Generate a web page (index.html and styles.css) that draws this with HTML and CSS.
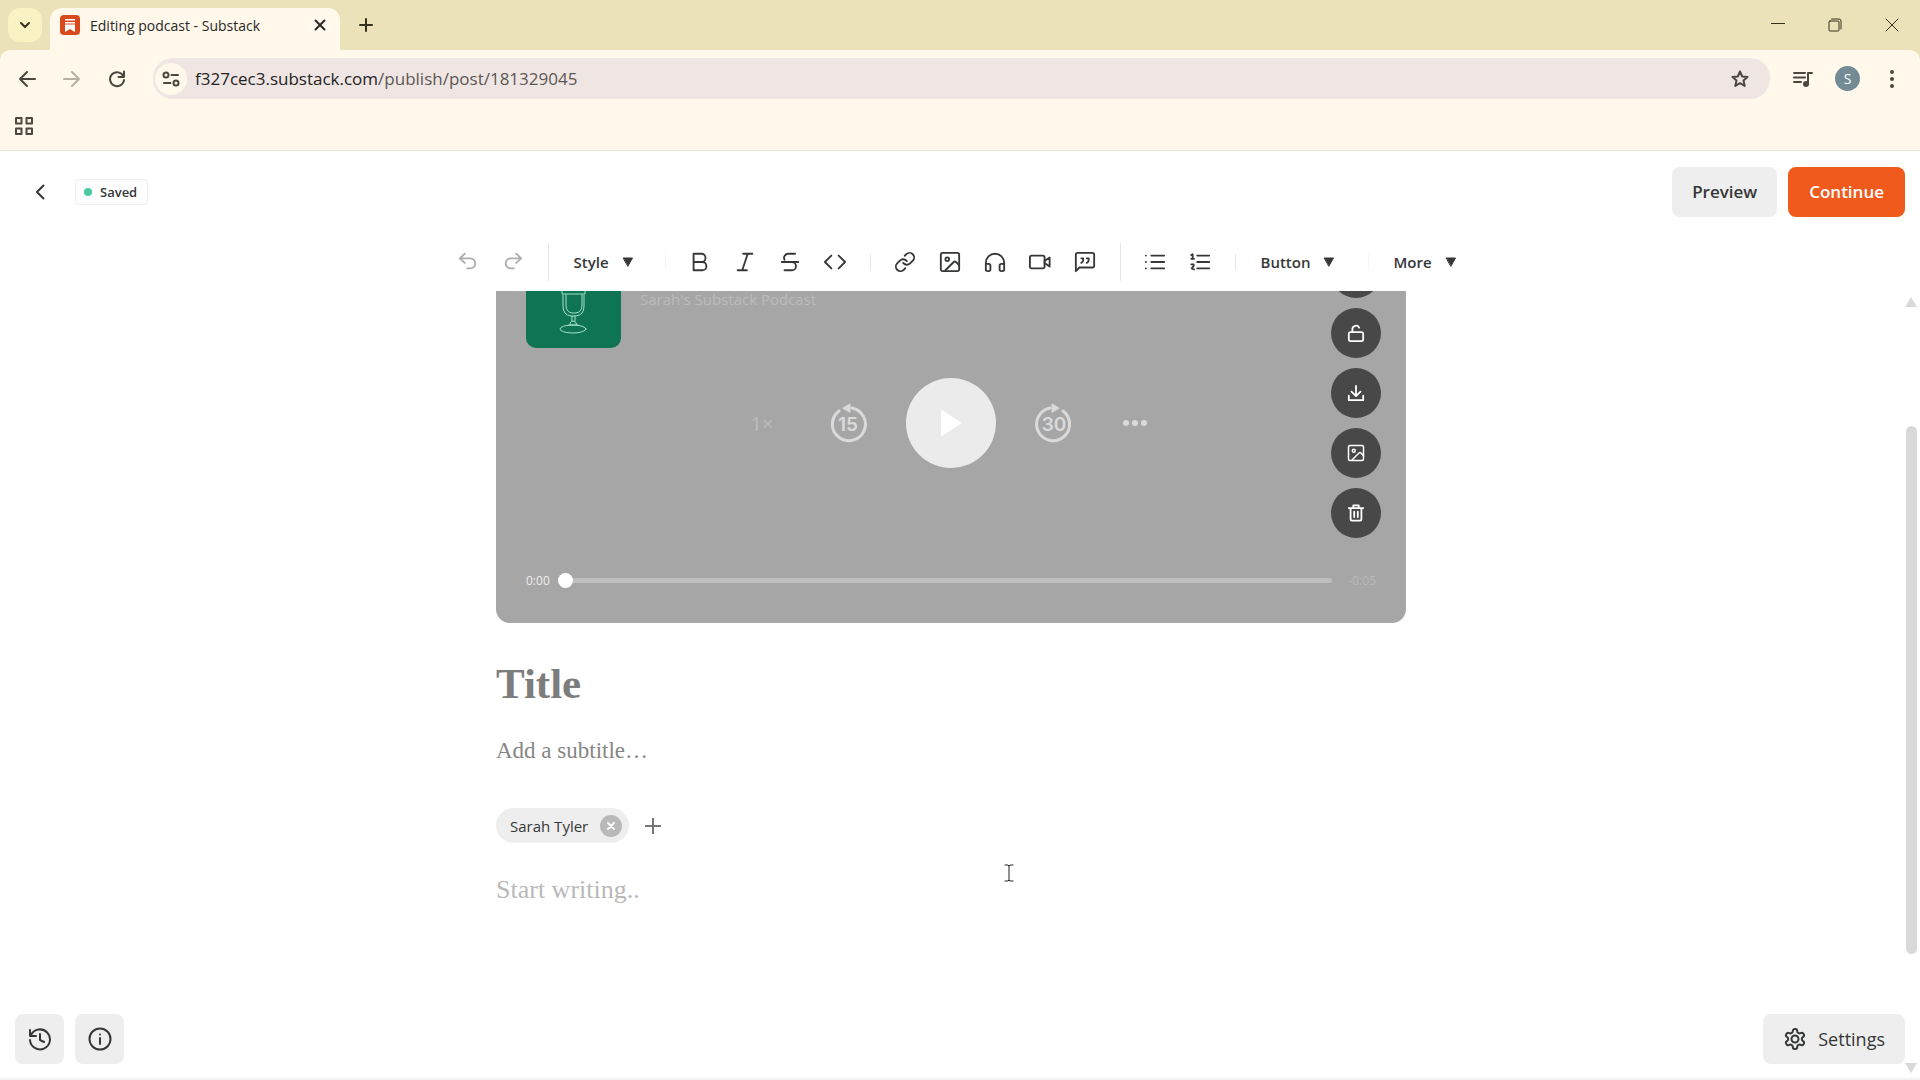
FILE: index.html
```
<!DOCTYPE html>
<html lang="en">
<head>
  <meta charset="utf-8">
  <title>Editing podcast - Substack</title>
  <link rel="stylesheet" href="styles.css">
</head>
<body>
  <!-- icons used more than once -->
  <svg class="defs" aria-hidden="true">
    <symbol id="picture" viewBox="0 0 24 24"><rect x="2" y="2" width="20" height="20" rx="2"/><circle cx="9" cy="9" r="2"/><path d="M7 21l9-9a2 2 0 0 1 2.500 0l3.500 3.500"/></symbol>
    <symbol id="caret" viewBox="0 0 12 10"><path d="M1.500 1h9L6 9z"/></symbol>
  </svg>

  <div class="tabstrip">
    <button class="tab-search" aria-label="Search tabs"><svg viewBox="0 0 16 16" width="16" height="16"><path d="M4 6l4 4 4-4"/></svg></button>
    <div class="tab">
      <svg class="favicon" viewBox="0 0 20 20" width="20" height="20"><rect width="20" height="20" rx="4"/><path d="M5 4h10v1.500H5zM5 7h10v1.500H5zM5 9.500h10V17l-5-3-5 3z"/></svg>
      <span class="tab-title">Editing podcast - Substack</span>
      <button class="plain" aria-label="Close tab"><svg viewBox="0 0 12 12" width="12" height="12"><path d="M1.500 1.500l9 9M10.500 1.500l-9 9"/></svg></button>
    </div>
    <button class="plain new-tab" aria-label="New tab"><svg viewBox="0 0 14 14" width="14" height="14"><path d="M7 1v12M1 7h12"/></svg></button>
    <div class="window-buttons">
      <button class="plain" aria-label="Minimize"><svg viewBox="0 0 14 14" width="14" height="14"><path d="M0 5.500h14"/></svg></button>
      <button class="plain" aria-label="Restore"><svg viewBox="0 0 14 14" width="14" height="14"><rect x="1" y="3" width="10" height="10" rx="1"/><path d="M3.500 1H11q2 0 2 2v8"/></svg></button>
      <button class="plain" aria-label="Close"><svg viewBox="0 0 14 14" width="14" height="14"><path d="M1 1l12 12M13 1L1 13"/></svg></button>
    </div>
  </div>

  <div class="browser-bar">
    <div class="address-row">
      <button class="plain nav" aria-label="Back"><svg viewBox="0 0 18 18" width="18" height="18"><path d="M17 9H2M9 2L2 9l7 7"/></svg></button>
      <button class="plain nav faded" aria-label="Forward"><svg viewBox="0 0 18 18" width="18" height="18"><path d="M1 9h15M9 2l7 7-7 7"/></svg></button>
      <button class="plain nav" aria-label="Reload"><svg viewBox="0 0 18 18" width="18" height="18"><path d="M15.500 6.500A7 7 0 1 0 16 10M16 1.500v5.500h-5.500"/></svg></button>
      <div class="address">
        <button class="plain site-info" aria-label="Site information"><svg viewBox="0 0 18 16" width="18" height="16"><circle cx="4" cy="4" r="2.500"/><path d="M9.500 4H16M2 12h6.500"/><circle cx="14" cy="12" r="2.500"/></svg></button>
        <span class="url">f327cec3.substack.com<span class="path">/publish/post/181329045</span></span>
        <button class="plain" aria-label="Bookmark this tab"><svg viewBox="0 0 20 20" width="20" height="20"><path d="M10 2.500l2.200 5 5.300.5-4 3.600 1.200 5.400-4.700-2.800L5.300 17l1.200-5.400-4-3.600 5.300-.5z"/></svg></button>
      </div>
      <button class="plain media" aria-label="Media controls"><svg viewBox="0 0 20 16" width="20" height="16"><path d="M1 2h11M1 6.500h11M1 11h7M15 13V2h4"/><circle class="solid" cx="13" cy="13" r="2"/></svg></button>
      <button class="avatar" aria-label="Profile">S</button>
      <button class="plain" aria-label="Browser menu"><svg viewBox="0 0 20 20" width="20" height="20"><g class="solid"><circle cx="10" cy="3" r="1"/><circle cx="10" cy="10" r="1"/><circle cx="10" cy="17" r="1"/></g></svg></button>
    </div>
    <div class="bookmarks"><button class="plain" aria-label="Apps"><svg viewBox="0 0 18 18" width="18" height="18"><path d="M1 1h5.500v5.500H1zM11.500 1H17v5.500h-5.500zM1 11.500h5.500V17H1zM11.500 11.500H17V17h-5.500z"/></svg></button></div>
  </div>

  <div class="app">
    <header class="app-header">
      <a class="back" href="#" aria-label="Back to posts"><svg viewBox="0 0 10 16" width="10" height="16"><path d="M8.500 1.500L2 8l6.500 6.500"/></svg></a>
      <span class="status">Saved</span>
      <button class="btn push">Preview</button>
      <button class="btn primary">Continue</button>
    </header>

    <div class="toolbar" role="toolbar">
      <button class="tool faded" aria-label="Undo"><svg viewBox="0 0 24 24" width="24" height="24"><path d="M8.500 3L3 8l5.500 5M3 8h11.500a5.500 5.500 0 0 1 0 11H11"/></svg></button>
      <button class="tool faded" aria-label="Redo"><svg viewBox="0 0 24 24" width="24" height="24"><path d="M15.500 3L21 8l-5.500 5M21 8H9.500a5.500 5.500 0 0 0 0 11H13"/></svg></button>
      <span class="sep tall"></span>
      <button class="menu">Style <svg width="12" height="10"><use href="#caret"/></svg></button>
      <span class="sep light"></span>
      <button class="tool" aria-label="Bold"><svg viewBox="0 0 24 24" width="24" height="24"><path d="M5 3h8.500a4.500 4.500 0 0 1 0 9H5zM5 12h9.500a4.500 4.500 0 0 1 0 9H5z"/></svg></button>
      <button class="tool" aria-label="Italic"><svg viewBox="0 0 24 24" width="24" height="24"><path d="M10 3h10M4 21h10M15 3L9 21"/></svg></button>
      <button class="tool" aria-label="Strikethrough"><svg viewBox="0 0 24 24" width="24" height="24"><path d="M17.500 3H10a4.500 4.500 0 0 0-4 6.500M3 12h18M14 12a4.500 4.500 0 0 1 0 9H6"/></svg></button>
      <button class="tool" aria-label="Code"><svg viewBox="0 0 24 24" width="24" height="24"><path d="M8 5l-7 7 7 7M16 5l7 7-7 7"/></svg></button>
      <span class="sep"></span>
      <button class="tool" aria-label="Link"><svg viewBox="0 0 24 24" width="24" height="24"><path d="M10 13a5 5 0 0 0 7.540.540l3-3a5 5 0 0 0-7.070-7.070l-1.720 1.710M14 11a5 5 0 0 0-7.540-.540l-3 3a5 5 0 0 0 7.070 7.070l1.710-1.710"/></svg></button>
      <button class="tool" aria-label="Image"><svg width="24" height="24"><use href="#picture"/></svg></button>
      <button class="tool" aria-label="Audio"><svg viewBox="0 0 24 24" width="24" height="24"><path d="M2 21v-8a10 10 0 0 1 20 0v8M2 14h3a2 2 0 0 1 2 2v4a2 2 0 0 1-2 2H4a2 2 0 0 1-2-2zM22 14h-3a2 2 0 0 0-2 2v4a2 2 0 0 0 2 2h1a2 2 0 0 0 2-2z"/></svg></button>
      <button class="tool" aria-label="Video"><svg viewBox="0 0 24 24" width="24" height="24"><rect x="1" y="5" width="16" height="14" rx="2"/><path d="M17 11l5.500-4v10L17 13z"/></svg></button>
      <button class="tool" aria-label="Quote"><svg viewBox="0 0 24 24" width="24" height="24"><path d="M2 22V4a2 2 0 0 1 2-2h16a2 2 0 0 1 2 2v12a2 2 0 0 1-2 2H6zM8 8h2v2q0 2-2 3M14 8h2v2q0 2-2 3"/></svg></button>
      <span class="sep tall"></span>
      <button class="tool" aria-label="Bullet list"><svg viewBox="0 0 24 24" width="24" height="24"><path d="M8 5h14M8 12h14M8 19h14M2 5h.1M2 12h.1M2 19h.1"/></svg></button>
      <button class="tool" aria-label="Numbered list"><svg viewBox="0 0 24 24" width="24" height="24"><path d="M9 5h13M9 12h13M9 19h13M2.500 4.500L4 3.500v5M2.500 8.500h3M2.500 14.500h2.500v2L3 19l2.500 1"/></svg></button>
      <span class="sep"></span>
      <button class="menu wide">Button <svg width="12" height="10"><use href="#caret"/></svg></button>
      <span class="sep light"></span>
      <button class="menu">More <svg width="12" height="10"><use href="#caret"/></svg></button>
    </div>

    <div class="scroller">
      <main class="post">
        <section class="player" aria-label="Podcast player">
          <div class="show">
            <div class="artwork">
              <svg viewBox="0 0 95 57" width="95" height="57"><path d="M36 0v3h23V0M37 4v11q0 9 8 10h5q8-1 8-10V4M40 4v10q0 7 6 8h4q6-1 6-8V4M46 25v5M49 25v5M44 34q0-4 3-4t4 4M43 34h9"/><ellipse cx="47" cy="38" rx="13" ry="4"/></svg>
            </div>
            <span class="show-name">Sarah's Substack Podcast</span>
          </div>

          <div class="controls">
            <button class="speed">1×</button>
            <button class="plain" aria-label="Back 15 seconds"><svg class="skip" viewBox="0 0 40 42" width="40" height="42"><path d="M11 9A16.500 16.500 0 1 0 24 6"/><path class="tip" d="M15 6l7-4v8z"/><text x="20" y="29">15</text></svg></button>
            <button class="play" aria-label="Play"><svg viewBox="0 0 22 28" width="22" height="28"><path d="M2 2v24l18-12z"/></svg></button>
            <button class="plain" aria-label="Forward 30 seconds"><svg class="skip" viewBox="0 0 40 42" width="40" height="42"><path d="M29 9A16.500 16.500 0 1 1 16 6"/><path class="tip" d="M25 6l-7-4v8z"/><text x="20" y="29">30</text></svg></button>
            <button class="plain dots" aria-label="More options"><svg viewBox="0 0 26 8" width="26" height="8"><circle cx="4" cy="4" r="3"/><circle cx="13" cy="4" r="3"/><circle cx="22" cy="4" r="3"/></svg></button>
          </div>

          <div class="progress">
            <span>0:00</span>
            <input type="range" min="0" max="5" value="0" aria-label="Position">
            <span class="remaining">-0:05</span>
          </div>

          <div class="actions">
            <button aria-label="Edit"></button>
            <button aria-label="Access"><svg viewBox="0 0 20 20" width="20" height="20"><rect x="2" y="9" width="16" height="10" rx="2"/><path d="M6 9V5.500A4 4 0 0 1 13.500 4"/></svg></button>
            <button aria-label="Download"><svg viewBox="0 0 20 20" width="20" height="20"><path d="M10 2v11M5 8.500l5 5 5-5M2 13v5h16v-5"/></svg></button>
            <button aria-label="Change cover"><svg width="20" height="20"><use href="#picture"/></svg></button>
            <button aria-label="Delete"><svg viewBox="0 0 20 20" width="20" height="20"><path d="M2 4.500h16M7 4V1.500h6V4M4 5v12q0 1.500 1.500 1.500h9q1.500 0 1.500-1.500V5M8 8.500v6M12 8.500v6"/></svg></button>
          </div>
        </section>

        <input class="title" type="text" placeholder="Title" aria-label="Title">
        <input class="subtitle" type="text" placeholder="Add a subtitle…" aria-label="Subtitle">
        <div class="bylines">
          <span class="byline">Sarah Tyler <button aria-label="Remove Sarah Tyler"><svg viewBox="0 0 10 10" width="10" height="10"><path d="M2 2l6 6M8 2L2 8"/></svg></button></span>
          <button class="plain add" aria-label="Add author"><svg viewBox="0 0 16 16" width="16" height="16"><path d="M8 0v16M0 8h16"/></svg></button>
        </div>
        <textarea class="body-text" placeholder="Start writing.." aria-label="Post body"></textarea>
      </main>
      <div class="scrollbar">
        <svg viewBox="0 0 12 10" width="12" height="10"><path d="M6 0l6 10H0z"/></svg>
        <span class="thumb"></span>
        <svg viewBox="0 0 12 10" width="12" height="10"><path d="M0 0h12L6 10z"/></svg>
      </div>
    </div>

    <footer class="app-footer">
      <button class="btn square" aria-label="Version history"><svg viewBox="0 0 24 24" width="24" height="24"><path d="M2 3v6h6M3 8a10 10 0 1 1-1 5M12 7v6l4 2"/></svg></button>
      <button class="btn square" aria-label="Post info"><svg viewBox="0 0 24 24" width="24" height="24"><circle cx="12" cy="12" r="10.500"/><path d="M12 11v6M12 7.500v.1"/></svg></button>
      <button class="btn push settings"><svg viewBox="0 0 24 24" width="24" height="24"><path d="M12.220 2h-.440a2 2 0 0 0-2 2v.180a2 2 0 0 1-1 1.730l-.430.250a2 2 0 0 1-2 0l-.150-.080a2 2 0 0 0-2.730.730l-.220.380a2 2 0 0 0 .730 2.730l.150.100a2 2 0 0 1 1 1.720v.510a2 2 0 0 1-1 1.740l-.150.090a2 2 0 0 0-.730 2.730l.220.380a2 2 0 0 0 2.730.730l.150-.080a2 2 0 0 1 2 0l.430.250a2 2 0 0 1 1 1.730V20a2 2 0 0 0 2 2h.440a2 2 0 0 0 2-2v-.180a2 2 0 0 1 1-1.730l.430-.250a2 2 0 0 1 2 0l.150.080a2 2 0 0 0 2.730-.730l.220-.390a2 2 0 0 0-.730-2.730l-.150-.080a2 2 0 0 1-1-1.740v-.500a2 2 0 0 1 1-1.740l.150-.090a2 2 0 0 0 .730-2.730l-.220-.380a2 2 0 0 0-2.730-.730l-.150.080a2 2 0 0 1-2 0l-.430-.250a2 2 0 0 1-1-1.730V4a2 2 0 0 0-2-2z"/><circle cx="12" cy="12" r="3.500"/></svg>Settings</button>
    </footer>
  </div>

  <!-- text cursor -->
  <svg class="cursor" viewBox="0 0 10 18" width="10" height="18"><path d="M1 1h3l1 1 1-1h3M5 2v14M1 17h3l1-1 1 1h3"/></svg>
</body>
</html>
```

FILE: styles.css
```
* { box-sizing: border-box; }
body { margin: 0; height: 100vh; display: flex; flex-direction: column; overflow: hidden; background: #ebe2b9; color: #363737; font-family: "Open Sans", "Noto Sans", sans-serif; font-size: 14px; }
button, input, textarea { font: inherit; color: inherit; border: 0; padding: 0; margin: 0; background: none; outline: 0; }
button { display: flex; align-items: center; justify-content: center; flex: none; }
a { color: inherit; }
svg { fill: none; stroke: currentColor; stroke-width: 2; stroke-linecap: round; stroke-linejoin: round; flex: none; display: block; }
.defs { position: absolute; width: 0; height: 0; }
.solid { fill: currentColor; }
.push { margin-left: auto; }

/* browser window */
.tabstrip { display: flex; align-items: center; height: 50px; flex: none; padding-left: 8px; color: #35311f; }
.tab-search { width: 34px; height: 34px; border-radius: 12px; background: #fbf2c4; }
.tab { display: flex; align-items: center; align-self: flex-end; width: 290px; height: 42px; margin-left: 8px; padding: 0 14px 8px 10px; border-radius: 12px 12px 0 0; background: #fff8eb; color: #2a2826; }
.favicon { stroke: none; fill: #fff; }
.favicon rect { fill: #d8491b; }
.tab-title { flex: 1; margin-left: 10px; white-space: nowrap; }
.new-tab { margin-left: 19px; }
.window-buttons { display: flex; gap: 43px; margin-left: auto; padding-right: 21px; }
.window-buttons svg { stroke-width: 1; }
.browser-bar { flex: none; height: 101px; background: #fff8eb; border-bottom: 1px solid #ebe5da; border-radius: 10px 10px 0 0; color: #4b473f; }
.address-row { display: flex; align-items: center; padding: 8px 18px; height: 57px; }
.nav { margin-right: 27px; }
.address { display: flex; align-items: center; flex: 1; height: 41px; border-radius: 20px; margin-right: 23px; padding: 0 20px 0 2px; background: #efe6e3; }
.site-info { width: 32px; height: 32px; border-radius: 50%; background: #fff8eb; }
.url { flex: 1; margin-left: 8px; font-size: 17px; color: #25221f; }
.path { color: #5c5654; }
.faded { opacity: .4; }
.avatar { width: 25px; height: 25px; margin: 0 22px; border-radius: 50%; background: #728b94; color: #fff; }
.bookmarks { padding: 10px 15px; }

/* editor */
.app { flex: 1; min-height: 0; display: flex; flex-direction: column; background: #fff; border-bottom: 2px solid #f3f3f5; }
.app-header { display: flex; align-items: center; flex: none; padding: 15px 15px 15px 35px; height: 81px; }
.status { display: flex; align-items: center; gap: 8px; height: 26px; margin-left: 30px; padding: 0 10px 0 8px; border: 1px solid #ececec; border-radius: 4px; font-size: 13px; font-weight: 600; }
.status::before { content: ""; width: 8px; height: 8px; border-radius: 50%; background: #4ac69b; }
.btn { height: 50px; padding: 0 20px; border-radius: 8px; background: #eee; font-size: 17px; font-weight: 600; }
.primary { margin-left: 11px; padding: 0 21px; background: #f15a1d; color: #fff; }
.toolbar { display: flex; align-items: center; justify-content: center; flex: none; height: 59px; padding-right: 2px; }
.tool { width: 45px; height: 45px; }
.tool svg { width: 22px; height: 22px; }
.menu { justify-content: flex-start; gap: 13px; width: 92px; height: 45px; padding-left: 13px; font-size: 15px; font-weight: 600; }
.menu.wide { width: 108px; }
.menu svg { fill: currentColor; stroke-width: 1; }
.sep { width: 1px; height: 16px; margin: 0 12px; background: #e6e6e6; }
.sep.tall { height: 38px; }
.sep.light { background: #f6f6f6; }

.scroller { flex: 1; min-height: 0; display: flex; }
.post { flex: 1; max-width: 910px; margin: 0 auto; display: flex; flex-direction: column; }
.player { position: relative; display: flex; flex-direction: column; flex: none; height: 332px; overflow: hidden; padding: 0 30px; border-radius: 0 0 14px 14px; background: #a6a6a6; color: #ededed; }
.show { display: flex; gap: 19px; }
.artwork { height: 57px; border-radius: 0 0 10px 10px; background: #0e7453; color: #a5e0c8; }
.artwork svg { stroke-width: 1; }
.show-name { color: #bcbcbc; font-size: 15px; line-height: 16px; }
.controls { display: flex; align-items: center; justify-content: center; height: 90px; margin-top: 30px; gap: 38px; }
.speed { width: 36px; margin-right: 10px; color: #bcbcbc; font-size: 20px; }
.skip { stroke: #dadada; stroke-width: 3; }
.skip .tip { fill: #dadada; stroke-width: 1; }
.skip text { fill: #dadada; stroke: none; font-family: Inter, sans-serif; font-size: 19px; font-weight: 600; text-anchor: middle; }
.play { width: 90px; height: 90px; border-radius: 50%; background: #ebebeb; color: #fff; }
.play svg { fill: currentColor; }
.dots { width: 46px; }
.dots svg { fill: #dadada; stroke: none; }
.progress { display: flex; align-items: center; height: 24px; margin-top: 100px; font-size: 12px; }
.progress input { flex: 1; height: 16px; margin: 0 16px 0 8px; appearance: none; }
.progress input::-webkit-slider-runnable-track { height: 5px; border-radius: 3px; background: #bebebe; }
.progress input::-webkit-slider-thumb { appearance: none; width: 15px; height: 15px; margin-top: -5px; border-radius: 50%; background: #fff; }
.remaining { color: #b9b9b9; }
.actions { position: absolute; top: -43px; right: 25px; display: flex; flex-direction: column; gap: 10px; }
.actions button { width: 50px; height: 50px; border-radius: 50%; background: #484848; color: #fff; }
.actions svg { width: 18px; height: 18px; }

.title, .subtitle, .body-text { width: 100%; flex: none; font-family: "Liberation Serif", serif; }
::placeholder { color: inherit; opacity: 1; }
.title { height: 52px; margin-top: 34px; font-size: 43px; font-weight: bold; color: #7d7d7d; }
.subtitle { height: 32px; margin-top: 26px; font-size: 23px; color: #868686; }
.bylines { display: flex; align-items: center; gap: 16px; margin-top: 41px; }
.byline { display: flex; align-items: center; gap: 12px; height: 35px; padding: 0 7px 0 14px; border-radius: 18px; background: #eee; font-size: 15px; }
.byline button { width: 22px; height: 22px; border-radius: 50%; background: #b9b9b9; color: #fff; }
.add { color: #777; }
.body-text { height: 60px; margin-top: 31px; resize: none; overflow: hidden; font-size: 26px; line-height: 32px; color: #b9b9b9; }
.scrollbar { display: flex; flex-direction: column; align-items: center; width: 18px; padding-top: 6px; }
.scrollbar svg { fill: #d9d9d9; stroke: none; }
.thumb { flex: none; width: 11px; height: 528px; margin: 119px 0 109px; border-radius: 6px; background: #d9d9d9; }
.app-footer { display: flex; align-items: center; gap: 11px; flex: none; height: 64px; padding: 0 15px 15px; }
.square { width: 49px; padding: 0; }
.settings { gap: 11px; font-size: 18px; font-weight: 400; }
.cursor { position: absolute; left: 1004px; top: 864px; stroke: #222; stroke-width: 1; }
```
